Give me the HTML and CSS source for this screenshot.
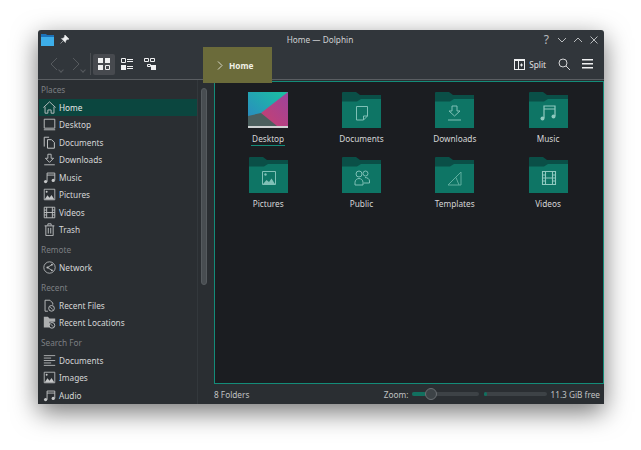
FILE: index.html
```html
<!DOCTYPE html>
<html>
    <head>
        <title>Home — Dolphin</title>
        <meta http-equiv="Content-Type" content="text/html; charset=utf-8"/>
        <link rel="stylesheet" href="styles.css">
    </head>
    <body>

    <svg class="defs" width="0" height="0">
        <symbol id="i-pictures" viewBox="0 0 16 16"><path d="M1.500 1.500h13v13h-13z" fill="none" stroke="currentColor"/><circle cx="4.500" cy="4.500" r="1.200" fill="currentColor"/><path d="M2 14l3.500-5 2.500 3 2.500-3.500 3.500 5.500z" fill="currentColor"/></symbol>
        <symbol id="i-music" viewBox="0 0 16 16"><path d="M5 13V2.500h9.500V11.500M5 5h9.500" fill="none" stroke="currentColor" stroke-width="1.100"/><circle cx="3.200" cy="13" r="2" fill="currentColor"/><circle cx="12.600" cy="11.600" r="2" fill="currentColor"/></symbol>
        <symbol id="i-video" viewBox="0 0 16 16"><path d="M1.500 1.500h13v13h-13zM4.500 1.500v13M11.500 1.500v13M4.500 8h7M1.500 5h3M1.500 8h3M1.500 11h3M11.500 5h3M11.500 8h3M11.500 11h3" fill="none" stroke="currentColor" stroke-width="1.100"/></symbol>
        <symbol id="i-download" viewBox="0 0 16 16"><path d="M6 1.500h4v5h3L8 11.500 3 6.500h3zM1.500 14.500h13" fill="none" stroke="currentColor" stroke-width="1.100"/></symbol>
        <symbol id="folder-base" viewBox="0 0 39 36">
            <path d="M0 1a1 1 0 0 1 1-1h13l4 3h21v30H0z" fill="#0a4f47"/>
            <path d="M0 9.500h15l4-2.500h20v29H0z" fill="#0e7565"/>
        </symbol>
    </svg>

    <div class="window">
        <div class="titlebar">
            <svg class="appIcon" width="13" height="12" viewBox="0 0 13 12"><path d="M0 0h5l1 1h7v11H0z" fill="#1d72b8"/><path d="M0 3h13v9H0z" fill="#3daee9"/></svg>
            <svg class="pinIcon" width="9" height="9" viewBox="0 0 9 9"><path d="M5 0l4 4-1 .6-.8-.4L5.600 6l-.2 1.600L1.400 3.600 3 3.400 4.800 1.800 4.400 1zM3 6L.5 8.500" fill="#eff0f1" stroke="#eff0f1" stroke-width=".5"/></svg>
            <div class="windowTitle">Home — Dolphin</div>
            <div class="windowButtons">
                <span class="help">?</span>
                <svg width="10" height="10" viewBox="0 0 10 10"><path d="M1 3l4 4 4-4" fill="none" stroke="#b8bbbd"/></svg>
                <svg width="10" height="10" viewBox="0 0 10 10"><path d="M1 7l4-4 4 4" fill="none" stroke="#b8bbbd"/></svg>
                <svg width="10" height="10" viewBox="0 0 10 10"><path d="M1.500 1.500l7 7M8.500 1.500l-7 7" fill="none" stroke="#b8bbbd"/></svg>
            </div>
        </div>

        <div class="toolbar">
            <div class="navButton">
                <svg width="14" height="14" viewBox="0 0 14 14"><path d="M10 1L4 7l6 6" fill="none" stroke="#565a5e"/></svg>
                <span class="navDrop"></span>
            </div>
            <div class="navButton">
                <svg width="14" height="14" viewBox="0 0 14 14"><path d="M4 1l6 6-6 6" fill="none" stroke="#565a5e"/></svg>
                <span class="navDrop"></span>
            </div>
            <div class="toolSep"></div>
            <div class="viewButton active">
                <svg width="12" height="12" viewBox="0 0 12 12"><path d="M0 0h5v5H0zM7 0h5v5H7zM0 7h5v5H0z" fill="#eff0f1"/><path d="M7.500 7.500h4v4h-4z" fill="none" stroke="#eff0f1"/></svg>
            </div>
            <div class="viewButton">
                <svg width="12" height="12" viewBox="0 0 12 12"><path d="M.5.500h4v4h-4z" fill="none" stroke="#eff0f1"/><path d="M0 7h5v5H0zM6 1h6v1H6zM6 3h6v1H6zM6 8h6v1H6zM6 10h6v1H6z" fill="#eff0f1"/></svg>
            </div>
            <div class="viewButton">
                <svg width="12" height="12" viewBox="0 0 12 12"><path d="M.5.500h4v3h-4zM6.500.500h4v3h-4zM3.500 6.500h3v2h-3z" fill="none" stroke="#eff0f1"/><path d="M7 7h5v5H7z" fill="#eff0f1"/></svg>
            </div>
            <div class="toolRight">
                <svg width="11" height="11" viewBox="0 0 11 11"><path d="M0 0h11v11H0z" fill="#eff0f1"/><path d="M1 2h3v8H1zM5 2h5v8H5z" fill="#31363b"/><path d="M6 6h3M7.500 4.500v3" stroke="#eff0f1"/></svg>
                <span class="splitLabel">Split</span>
                <svg class="searchIcon" width="12" height="12" viewBox="0 0 12 12"><circle cx="5" cy="5" r="4" fill="none" stroke="#d5d6d7"/><path d="M8 8l4 4" stroke="#d5d6d7"/></svg>
                <svg class="menuIcon" width="11" height="10" viewBox="0 0 11 10"><path d="M0 0h11v1.500H0zM0 4h11v1.500H0zM0 8h11v1.500H0z" fill="#eff0f1"/></svg>
            </div>
        </div>

        <div class="crumb">
            <svg width="6" height="9" viewBox="0 0 6 9"><path d="M1 .5l4 4-4 4" fill="none" stroke="#d8d8c8"/></svg>
            <span>Home</span>
        </div>

        <div class="main">
            <div class="sidebar">
                <div class="heading first">Places</div>
                <div class="row selected">
                    <svg class="rowIcon" viewBox="0 0 16 16"><path d="M.5 8L8 1l7.500 7M2.500 7v8H6v-4h4v4h3.500V7" fill="none" stroke="currentColor" stroke-width="1.100"/></svg>
                    <span>Home</span>
                </div>
                <div class="row">
                    <svg class="rowIcon" viewBox="0 0 16 16"><path d="M1.500 1.500h13v11h-13zM1 14.500h14" fill="none" stroke="currentColor" stroke-width="1.100"/></svg>
                    <span>Desktop</span>
                </div>
                <div class="row">
                    <svg class="rowIcon" viewBox="0 0 16 16"><path d="M1.500 13V1.500h6M5.500 15V4.500h5l3.500 3.500v7z" fill="none" stroke="currentColor" stroke-width="1.200"/></svg>
                    <span>Documents</span>
                </div>
                <div class="row">
                    <svg class="rowIcon"><use href="#i-download"/></svg>
                    <span>Downloads</span>
                </div>
                <div class="row">
                    <svg class="rowIcon"><use href="#i-music"/></svg>
                    <span>Music</span>
                </div>
                <div class="row">
                    <svg class="rowIcon"><use href="#i-pictures"/></svg>
                    <span>Pictures</span>
                </div>
                <div class="row">
                    <svg class="rowIcon"><use href="#i-video"/></svg>
                    <span>Videos</span>
                </div>
                <div class="row">
                    <svg class="rowIcon" viewBox="0 0 16 16"><path d="M2 3.500h12M6 3V1h4v2M3.500 3.500v12h9v-12M6.500 6v7M9.500 6v7" fill="none" stroke="currentColor" stroke-width="1.100"/></svg>
                    <span>Trash</span>
                </div>

                <div class="heading">Remote</div>
                <div class="row">
                    <svg class="rowIcon" viewBox="0 0 16 16"><circle cx="8" cy="8" r="7" fill="none" stroke="currentColor"/><path d="M11 4.500L5.500 8l5.500 3.500" fill="none" stroke="currentColor"/><circle cx="5.500" cy="8" r="1.300" fill="currentColor"/><circle cx="11" cy="4.500" r="1.100" fill="currentColor"/><circle cx="11" cy="11.500" r="1.100" fill="currentColor"/></svg>
                    <span>Network</span>
                </div>

                <div class="heading">Recent</div>
                <div class="row">
                    <svg class="rowIcon" viewBox="0 0 16 16"><path d="M6 15H2.500V1.500h6l3.500 3.500v2" fill="none" stroke="currentColor" stroke-width="1.100"/><circle cx="10.500" cy="11.500" r="3.500" fill="none" stroke="currentColor" stroke-width="1.100"/><path d="M9 10l3 3" stroke="currentColor"/></svg>
                    <span>Recent Files</span>
                </div>
                <div class="row">
                    <svg class="rowIcon" viewBox="0 0 16 16"><path d="M1 1h5l2 2h7v4H8v7H1z" fill="currentColor" opacity=".85"/><circle cx="11" cy="11.500" r="3.500" fill="none" stroke="currentColor" stroke-width="1.100"/><path d="M9.500 10l3 3" stroke="currentColor"/></svg>
                    <span>Recent Locations</span>
                </div>

                <div class="heading">Search For</div>
                <div class="row">
                    <svg class="rowIcon" viewBox="0 0 16 16"><path d="M1 2h14M1 5h9M1 8h14M1 11h9M1 14h14" fill="none" stroke="currentColor"/></svg>
                    <span>Documents</span>
                </div>
                <div class="row">
                    <svg class="rowIcon"><use href="#i-pictures"/></svg>
                    <span>Images</span>
                </div>
                <div class="row">
                    <svg class="rowIcon"><use href="#i-music"/></svg>
                    <span>Audio</span>
                </div>
            </div>

            <div class="scrollColumn"><div class="scrollThumb"></div></div>

            <div class="content">
                <div class="view">
                    <div class="grid">
                        <div class="item">
                            <svg class="thumb" width="40" height="36" viewBox="0 0 40 36">
                                <defs>
                                    <linearGradient id="skyGrad" x1="0" y1="1" x2="1" y2="0"><stop offset="0" stop-color="#2d84c4"/><stop offset="1" stop-color="#19c3a0"/></linearGradient>
                                    <linearGradient id="wineGrad" x1="0" y1="1" x2="1" y2="0"><stop offset="0" stop-color="#c8406f"/><stop offset="1" stop-color="#9c439c"/></linearGradient>
                                </defs>
                                <path d="M0 0h40v34H0z" fill="url(#skyGrad)"/>
                                <path d="M40 0v34H20L13 21z" fill="url(#wineGrad)"/>
                                <path d="M0 34V24l13-3 16 13z" fill="#4c5f5e"/>
                                <path d="M0 34h40v2H0z" fill="#cfd2d3"/>
                            </svg>
                            <span class="underlined">Desktop</span>
                        </div>
                        <div class="item">
                            <svg class="folder" viewBox="0 0 39 36"><use href="#folder-base"/><path d="M14.500 14.500h11v9.500l-4 4h-7zM25.500 24h-4v4" fill="none" stroke="#7fc0b6"/></svg>
                            <span>Documents</span>
                        </div>
                        <div class="item">
                            <svg class="folder" viewBox="0 0 39 36"><use href="#folder-base"/><path d="M17 14h5v5h3l-5.500 5-5.500-5h3zM13 28h13" fill="none" stroke="#7fc0b6"/></svg>
                            <span>Downloads</span>
                        </div>
                        <div class="item">
                            <svg class="folder" viewBox="0 0 39 36"><use href="#folder-base"/><path d="M15 26V14h11v10M15 17h11" fill="none" stroke="#8fc9bf" stroke-width="1.200"/><circle cx="13.500" cy="26.500" r="2" fill="#8fc9bf"/><circle cx="24.500" cy="24.500" r="2" fill="#8fc9bf"/></svg>
                            <span>Music</span>
                        </div>
                        <div class="item">
                            <svg class="folder" viewBox="0 0 39 36"><use href="#folder-base"/><path d="M13.500 14.500h13v13h-13z" fill="none" stroke="#7fc0b6"/><circle cx="16.500" cy="17.500" r="1.200" fill="#7fc0b6"/><path d="M14 27l3.500-4 2.500 2 2.500-3.500 3.500 5.500z" fill="#7fc0b6"/></svg>
                            <span>Pictures</span>
                        </div>
                        <div class="item">
                            <svg class="folder" viewBox="0 0 39 36"><use href="#folder-base"/><circle cx="17" cy="17" r="3" fill="none" stroke="#7fc0b6"/><circle cx="23.500" cy="16.500" r="2.500" fill="none" stroke="#7fc0b6"/><path d="M13 28v-2.500c0-2.500 2-4 4-4s4 1.500 4 4V28zM23 20.500c2.500 0 4.500 1.500 4.500 3.500v2H21.500" fill="none" stroke="#7fc0b6"/></svg>
                            <span>Public</span>
                        </div>
                        <div class="item">
                            <svg class="folder" viewBox="0 0 39 36"><use href="#folder-base"/><path d="M13 28l13-13v13zM21 20.500l3 7.500" fill="none" stroke="#5fae9f"/></svg>
                            <span>Templates</span>
                        </div>
                        <div class="item">
                            <svg class="folder" viewBox="0 0 39 36"><use href="#folder-base"/><path d="M13.500 14.500h13v13h-13zM16.500 14.500v13M23.500 14.500v13M16.500 21h7M13.500 18h3M13.500 21h3M13.500 24h3M23.500 18h3M23.500 21h3M23.500 24h3" fill="none" stroke="#8fc9bf" stroke-width="1.100"/></svg>
                            <span>Videos</span>
                        </div>
                    </div>
                </div>
                <div class="statusbar">
                    <span class="folderCount">8 Folders</span>
                    <span class="zoomLabel">Zoom:</span>
                    <div class="zoomSlider"><div class="zoomFill"></div><div class="zoomKnob"></div></div>
                    <div class="spaceBar"><div class="spaceFill"></div></div>
                    <span class="freeLabel">11.3 GiB free</span>
                </div>
            </div>
        </div>
    </div>

    </body>
</html>
```

FILE: styles.css
```css
html, body {
    margin: 0;
    padding: 0;
    height: 450px;
    overflow: hidden;
    background-color: #fff;
    font-family: "Noto Sans", sans-serif;
    font-size: 8.25px;
    color: #d5d6d7;
}

.defs {
    display: block;
    height: 0;
}

.window {
    position: relative;
    width: 566px;
    height: 374px;
    margin: 30px 0 0 38px;
    background-color: #31363b;
    border-radius: 3px 3px 0 0;
    box-shadow: 0 8px 26px rgba(0, 0, 0, .55);
    display: flex;
    flex-direction: column;
}

/**** TITLE ****/

.titlebar {
    height: 19px;
    flex: none;
    display: flex;
    align-items: center;
    padding: 0 5px 0 3px;
    position: relative;
}

.appIcon {
    margin-right: 6px;
}

.windowTitle {
    position: absolute;
    left: 0;
    right: 2px;
    text-align: center;
    color: #d0d2d3;
}

.windowButtons {
    margin-left: auto;
    display: flex;
    align-items: center;
    gap: 6px;
}

.help {
    font-size: 12px;
    color: #b8bbbd;
    margin-right: 2px;
}

/**** TOOLBAR ****/

.toolbar {
    height: 31px;
    flex: none;
    display: flex;
    align-items: center;
    padding-left: 5px;
    border-bottom: 1px solid #5a5e62;
    box-sizing: border-box;
}

.navButton {
    position: relative;
    width: 22px;
    height: 22px;
    display: flex;
    align-items: center;
    justify-content: center;
}

.navDrop {
    position: absolute;
    left: 16px;
    top: 15px;
    width: 3px;
    height: 3px;
    border-right: 1px solid #565a5e;
    border-bottom: 1px solid #565a5e;
    transform: rotate(45deg);
}

.toolSep {
    width: 1px;
    height: 22px;
    background-color: #4a4e52;
    margin: 0 2px 0 3px;
}

.viewButton {
    width: 22px;
    height: 21px;
    margin-right: 1px;
    display: flex;
    align-items: center;
    justify-content: center;
    border-radius: 2px;
}

.viewButton.active {
    background-color: #474a4f;
}

.toolRight {
    margin-left: auto;
    display: flex;
    align-items: center;
    padding-right: 11px;
}

.splitLabel {
    margin-left: 4px;
    color: #e0e1e2;
}

.searchIcon {
    margin-left: 12px;
}

.menuIcon {
    margin-left: 12px;
}

.crumb {
    position: absolute;
    left: 165px;
    top: 17px;
    width: 69px;
    height: 36px;
    background-color: #6b6b3a;
    display: flex;
    align-items: center;
    gap: 6px;
    padding-left: 14px;
    box-sizing: border-box;
    font-weight: bold;
    color: #f0f0e6;
    z-index: 2;
}

/**** SIDEBAR ****/

.main {
    flex: 1;
    display: flex;
    min-height: 0;
}

.sidebar {
    width: 159px;
    flex: none;
    background-color: #2a2e32;
    border-right: 1px solid #33383c;
    overflow: hidden;
}

.heading {
    height: 16.5px;
    line-height: 16.5px;
    padding: 3.7px 0 0 3px;
    color: #7c7f82;
}

.heading.first {
    padding-top: 2px;
}

.row {
    height: 17.5px;
    display: flex;
    align-items: center;
    padding-left: 4px;
    gap: 3px;
    margin-left: 1px;
}

.row.selected {
    background-color: #0b463f;
    color: #e4e6e6;
}

.rowIcon {
    width: 13px;
    height: 13px;
    flex: none;
    color: #c4c6c7;
}

.scrollColumn {
    width: 16px;
    flex: none;
    background-color: #2a2e32;
}

.scrollThumb {
    width: 6px;
    height: 197px;
    margin: 8px 0 0 3px;
    background-color: #484d51;
    border: 1px solid #565b5f;
    box-sizing: border-box;
    border-radius: 3px;
}

/**** CONTENT ****/

.content {
    flex: 1;
    display: flex;
    flex-direction: column;
    min-width: 0;
    background-color: #2a2e32;
}

.view {
    height: 303px;
    flex: none;
    margin-top: 1px;
    background-color: #1b1d21;
    border: 1px solid #148c79;
    box-sizing: border-box;
    padding: 10px 0 0 6.5px;
}

.grid {
    display: grid;
    grid-template-columns: repeat(4, 93.3px);
    grid-auto-rows: 64.5px;
}

.item {
    display: flex;
    flex-direction: column;
    align-items: center;
}

.folder {
    width: 39px;
    height: 36px;
    flex: none;
}

.thumb {
    flex: none;
}

.item span {
    margin-top: 5px;
    line-height: 12px;
    color: #d5d6d7;
}

.item .underlined {
    border-bottom: 1px solid #148c79;
    padding: 0 1px;
}

/**** STATUS ****/

.statusbar {
    flex: 1;
    display: flex;
    align-items: center;
    color: #c0c2c3;
}

.folderCount {
    margin-right: auto;
}

.zoomLabel {
    margin-right: 4px;
}

.zoomSlider {
    position: relative;
    width: 67px;
    height: 4px;
    background-color: #3d4246;
    border-radius: 2px;
}

.zoomFill {
    width: 14px;
    height: 4px;
    background-color: #11705f;
    border-radius: 2px;
}

.zoomKnob {
    position: absolute;
    left: 13px;
    top: -4px;
    width: 12px;
    height: 12px;
    box-sizing: border-box;
    border-radius: 50%;
    background-color: #3d4347;
    border: 1px solid #6a6f73;
}

.spaceBar {
    width: 63px;
    height: 4px;
    margin-left: 5px;
    background-color: #3d4246;
    border-radius: 2px;
}

.spaceFill {
    width: 3px;
    height: 4px;
    background-color: #11705f;
    border-radius: 2px;
}

.freeLabel {
    margin: 0 4px 0 3px;
}
```
